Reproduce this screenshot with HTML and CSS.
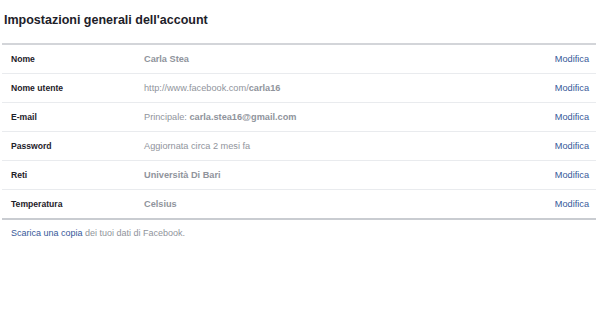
FILE: index.html
```html
<!DOCTYPE html>
<html lang="it">
<head>
<meta charset="utf-8">
<link rel="stylesheet" href="styles.css">
</head>
<body>
<div class="page">
  <h1 class="title">Impostazioni generali dell'account</h1>
  <div class="table">
    <div class="row">
      <div class="label">Nome</div>
      <div class="value"><b>Carla Stea</b></div>
      <a class="edit">Modifica</a>
    </div>
    <div class="row">
      <div class="label">Nome utente</div>
      <div class="value">http://www.facebook.com/<b>carla16</b></div>
      <a class="edit">Modifica</a>
    </div>
    <div class="row">
      <div class="label">E-mail</div>
      <div class="value">Principale: <b>carla.stea16@gmail.com</b></div>
      <a class="edit">Modifica</a>
    </div>
    <div class="row">
      <div class="label">Password</div>
      <div class="value">Aggiornata circa 2 mesi fa</div>
      <a class="edit">Modifica</a>
    </div>
    <div class="row">
      <div class="label">Reti</div>
      <div class="value"><b>Università Di Bari</b></div>
      <a class="edit">Modifica</a>
    </div>
    <div class="row">
      <div class="label">Temperatura</div>
      <div class="value"><b>Celsius</b></div>
      <a class="edit">Modifica</a>
    </div>
  </div>
  <p class="footer"><a class="link">Scarica una copia</a> dei tuoi dati di Facebook.</p>
</div>
</body>
</html>
```
FILE: styles.css
```css
html, body {
  margin: 0;
  padding: 0;
  background: #fff;
}
body {
  font-family: "Liberation Sans", Arial, sans-serif;
  color: #1d2129;
}
.page {
  padding: 12px 4px 0 2px;
}
.title {
  margin: 0 0 0 2px;
  font-size: 12.5px;
  font-weight: bold;
  line-height: 17px;
  color: #1d2129;
}
.table {
  margin-top: 14px;
  border-top: 2px solid #d3d5d9;
  border-bottom: 2px solid #c9ccd1;
}
.row {
  display: grid;
  grid-template-columns: 133px 1fr auto;
  align-items: center;
  height: 28px;
  padding: 0 7px 0 9px;
  font-size: 9px;
}
.row + .row {
  border-top: 1px solid #e9ebee;
}
.label {
  font-size: 8.6px;
  font-weight: bold;
  color: #1d2129;
}
.value {
  font-size: 9.2px;
  color: #90949c;
}
.value b {
  font-weight: bold;
}
.edit {
  font-size: 9.2px;
  color: #365899;
}
.footer {
  margin: 8px 0 0 9px;
  font-size: 9px;
  color: #90949c;
}
.link {
  color: #365899;
}
```
